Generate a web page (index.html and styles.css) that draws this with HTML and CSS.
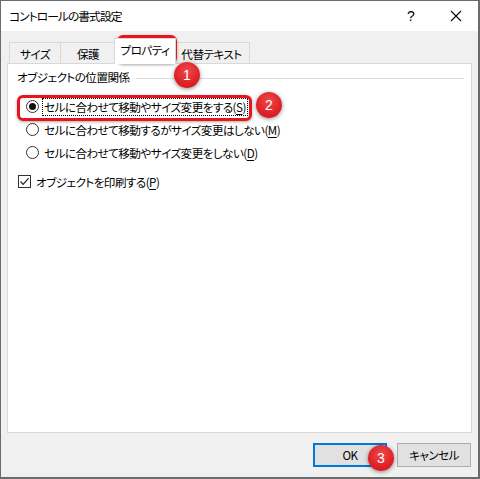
FILE: index.html
```html
<!DOCTYPE html>
<html lang="ja">
<head>
<meta charset="utf-8">
<title>コントロールの書式設定</title>
<link rel="stylesheet" href="styles.css">
</head>
<body>
<div class="window">
  <div class="titlebar">
    <span class="title">コントロールの書式設定</span>
    <span class="help">?</span>
    <span class="close"><svg width="12" height="12" viewBox="0 0 12 12"><path d="M1 1L11 11M11 1L1 11" stroke="#000" stroke-width="1.1" fill="none"/></svg></span>
  </div>
  <div class="client">
    <div class="tabs">
      <div class="tab t1">サイズ</div>
      <div class="tab t2">保護</div>
      <div class="tab active">プロパティ</div>
      <div class="tab t4">代替テキスト</div>
    </div>
    <div class="panel">
      <div class="group-label"><span>オブジェクトの位置関係</span><span class="rule"></span></div>
      <div class="opt"><span class="radio on"></span><span class="lbl focus">セルに合わせて移動やサイズ変更をする(<u>S</u>)</span></div>
      <div class="opt"><span class="radio"></span><span class="lbl">セルに合わせて移動するがサイズ変更はしない(<u>M</u>)</span></div>
      <div class="opt"><span class="radio"></span><span class="lbl">セルに合わせて移動やサイズ変更をしない(<u>D</u>)</span></div>
      <div class="opt chk-row"><span class="check"><svg width="11" height="11" viewBox="0 0 11 11"><path d="M1.5 5.5L4.2 8.3L9.6 2.2" stroke="#222" stroke-width="1.2" fill="none"/></svg></span><span class="lbl">オブジェクトを印刷する(<u>P</u>)</span></div>
    </div>
    <div class="buttons">
      <div class="btn default">OK</div>
      <div class="btn">キャンセル</div>
    </div>
  </div>
  <div class="hl hl-tab"></div>
  <div class="hl hl-row"></div>
  <div class="badge b1">1</div>
  <div class="badge b2">2</div>
  <div class="badge b3">3</div>
</div>
</body>
</html>
```
FILE: styles.css
```css
* { box-sizing: border-box; }
html, body { margin: 0; padding: 0; }
body {
  width: 480px; height: 479px; overflow: hidden; background: #fff;
  font-family: "Noto Sans CJK JP", "Noto Sans", sans-serif;
  font-size: 11.6px; color: #000;
  font-feature-settings: "palt";
  letter-spacing: -0.55px;
}
.window {
  position: relative;
  width: 480px; height: 479px;
  border: 1px solid #6b6b6b;
  border-right-width: 2px;
  border-bottom-width: 2px;
  display: flex; flex-direction: column;
  background: #f0f0f0;
}
.titlebar {
  height: 30px; background: #fff;
  display: flex; align-items: center;
  padding-left: 8px;
}
.title { flex: 1; font-size: 11.8px; line-height: 1; letter-spacing: -1px; }
.help { width: 44px; text-align: center; font-size: 14px; font-family: "Liberation Sans", sans-serif; margin-right: 1px; letter-spacing: 0; }
.close { width: 44px; display: flex; justify-content: center; }
.client { flex: 1; display: flex; flex-direction: column; padding: 0 6px 0 6px; }
.tabs { display: flex; align-items: flex-end; height: 33px; padding-left: 2px; }
.tab {
  height: 22px; border: 1px solid #d9d9d9; border-bottom: none;
  background: #f0f0f0; display: flex; align-items: center; justify-content: center;
  margin-left: -1px;
}
.t1 { width: 52px; margin-left: 0; }
.t2 { width: 56px; }
.t4 { width: 77px; }
.tab.active {
  height: 26px; width: 62px; background: #fff; margin-left: -2px; margin-right: -2px;
  position: relative; z-index: 1; padding-bottom: 3px;
}
.panel {
  height: 370px; background: #fff; border: 1px solid #d9d9d9; margin-top: -1px;
  padding: 5px 0 0 9px;
}
.group-label { display: flex; align-items: center; height: 16px; margin-right: 7px; }
.group-label .rule { flex: 1; height: 1px; background: #dcdcdc; margin-left: 6px; margin-top: 2px; }
.opt { display: flex; align-items: center; height: 23px; padding-left: 9px; }
.opt:nth-child(2) { margin-top: 10px; }
.chk-row { margin-top: 6px; padding-left: 1px; }
.radio {
  width: 13px; height: 13px; border: 1px solid #333; border-radius: 50%;
  display: flex; align-items: center; justify-content: center; margin-right: 4px;
}
.radio.on::after { content: ""; width: 7px; height: 7px; border-radius: 50%; background: #111; }
.check {
  width: 13px; height: 13px; border: 1px solid #333; display: flex;
  align-items: center; justify-content: center; margin-right: 4px;
}
.lbl { line-height: 16px; padding: 0 1px; }
.lbl u { text-decoration-thickness: 1px; text-underline-offset: 2px; }
.focus { outline: 1px dotted #000; }
.buttons { display: flex; justify-content: flex-end; gap: 10px; padding: 10px 1px 0 0; }
.btn {
  width: 74px; height: 24px; border: 1px solid #adadad; background: #e1e1e1;
  display: flex; align-items: center; justify-content: center;
}
.btn.default { border: 2px solid #0078d7; }
.hl {
  position: absolute; border: 3px solid #e8141c; border-radius: 6px;
  box-shadow: 0 1px 3px rgba(0,0,0,0.35);
}
.hl-tab { left: 116px; top: 34px; width: 60px; height: 29px; }
.hl-row { left: 16px; top: 94px; width: 235px; height: 26px; }
.badge {
  position: absolute; width: 26px; height: 26px; border-radius: 50%;
  background: radial-gradient(circle at 50% 35%, #f0494c 0%, #dd2226 60%, #c8151a 100%);
  color: #fff; font-family: "Liberation Sans", sans-serif; font-size: 14px; letter-spacing: 0;
  display: flex; align-items: center; justify-content: center;
  box-shadow: 0 1px 4px rgba(0,0,0,0.45);
}
.b1 { left: 173px; top: 61px; }
.b2 { left: 255px; top: 91px; }
.b3 { left: 367px; top: 444px; }
```
